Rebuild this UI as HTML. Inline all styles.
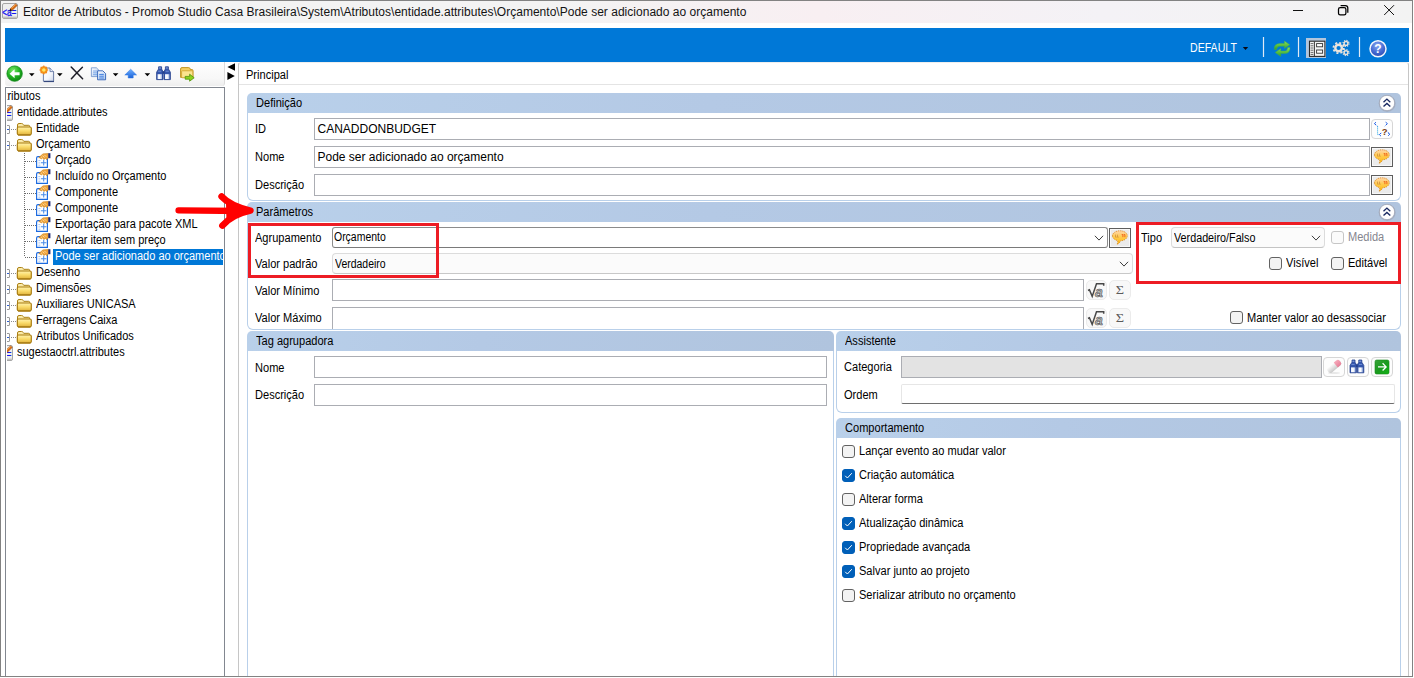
<!DOCTYPE html>
<html lang="pt-BR">
<head>
<meta charset="utf-8">
<title>Editor de Atributos</title>
<style>
*{box-sizing:border-box;margin:0;padding:0}
html,body{width:1414px;height:678px;overflow:hidden;background:#fff}
body{position:relative;font-family:"Liberation Sans",sans-serif;font-size:11px;color:#000;line-height:13px}
.a{position:absolute}
.t{position:absolute;white-space:nowrap;font-size:12px;line-height:13px;height:13px;margin:1px 0 0 -1px;transform-origin:0 0;transform:scaleX(.921)}
.u{position:absolute;white-space:nowrap;font-size:12px;line-height:13px;height:13px;margin:1px 0 0 -.5px}
.v{position:absolute;white-space:nowrap;font-size:12px;line-height:13px;height:13px;margin-top:1px}
.hdr{position:absolute;height:20px;background:linear-gradient(90deg,#b9d0ea 0%,#b4c9e5 40%,#b0c4de 100%);border-radius:5px 5px 0 0}
.gb{position:absolute;border:1px solid #b9d0ea;border-top:none;border-radius:0 0 6px 6px;background:#fff}
.in{position:absolute;height:22px;background:#fff;border:1px solid #abadb3}
.cb{position:absolute;width:13px;height:13px;border:1px solid #626262;border-radius:3px;background:#f3f3f3}
.cb.on{background:#005fb8;border-color:#005fb8}
.cb.dis{border-color:#c6c6c6;background:#fbfbfb}
.btn{position:absolute;width:22px;height:20px;border:1px solid #d6d6d6;border-radius:4px;background:#fdfdfd}
.btn2{position:absolute;width:22px;height:20px;border:1px solid #5e5e5e;background:#ebebeb;box-shadow:inset 0 0 0 1px #f8f8f8}
.tr{position:absolute;white-space:nowrap;font-size:11px;line-height:16px;height:16px;margin-left:-1px}
svg{position:absolute;overflow:visible}
</style>
</head>
<body>
<div class="a" style="left:0;top:0;width:1413px;height:677px;border:1px solid #828282"></div>
<div class="a" style="left:1px;top:1px;width:1411px;height:22px;background:linear-gradient(90deg,#f3f3f3 0%,#f3f3f3 38%,#f8eff2 58%,#f4f2f6 78%,#f3f3f3 100%)"></div>
<svg style="left:2px;top:3px" width="16" height="16"><use href="#appico"/></svg>
<svg style="left:1280px;top:0" width="130" height="24" viewBox="1280 0 130 24">
<path d="M1293 10.5 h10" stroke="#111" stroke-width="1"/>
<rect x="1338.5" y="7.5" width="7.4" height="7.4" rx="1.7" fill="none" stroke="#000" stroke-width="1.25"/>
<path d="M1340.6 5.5 h4.8 q2.4 0 2.4 2.4 v4.8" fill="none" stroke="#000" stroke-width="1.25"/>
<path d="M1384.2 5.2 l9.8 9.8 M1394 5.2 l-9.8 9.8" stroke="#111" stroke-width="1"/>
</svg>

<div class="u" style="left:23.5px;top:4px;line-height:15px;height:15px;color:#141414;letter-spacing:.018px">Editor de Atributos - Promob Studio Casa Brasileira\System\Atributos\entidade.attributes\Orçamento\Pode ser adicionado ao orçamento</div>
<div class="a" style="left:5px;top:28px;width:1404px;height:34px;background:#0078d7"></div>
<div class="u" style="left:1190px;top:41px;color:#fff;transform-origin:0 0;transform:scaleX(.882)">DEFAULT</div>
<svg style="left:1180px;top:28px" width="234" height="36" viewBox="1180 28 234 36">
<defs>
<linearGradient id="ggr" x1="0" y1="0" x2="0" y2="1"><stop offset="0" stop-color="#8be05a"/><stop offset="1" stop-color="#2fa12a"/></linearGradient>
<radialGradient id="ghelp" cx=".45" cy=".3" r=".75"><stop offset="0" stop-color="#86a6f2"/><stop offset=".6" stop-color="#4367d0"/><stop offset="1" stop-color="#2847ac"/></radialGradient>
</defs>
<path d="M1242.8 47 h5.4 l-2.7 3 z" fill="#0a0a14"/>
<path d="M1263.5 37 v20 M1298.5 37 v20 M1359.5 37 v20" stroke="#dfeaf6" stroke-width="1.2"/>
<!-- refresh -->
<path d="M1274.2 49.4 Q1274 43.8 1279.6 43.6 L1284.4 43.6 L1284.4 41 L1289.8 44.8 L1284.4 48.6 L1284.4 46.2 L1280 46.2 Q1276.8 46.2 1276.6 49.6 Z" fill="url(#ggr)" stroke="#46b43a" stroke-width=".4"/>
<path d="M1290 47.4 Q1290.2 53.4 1284.6 53.6 L1280.8 53.6 L1280.8 56.4 L1275.2 52.4 L1280.8 48.6 L1280.8 51 L1284.4 51 Q1287.4 51 1287.6 47.4 Z" fill="url(#ggr)" stroke="#46b43a" stroke-width=".4"/>
<!-- list icon -->
<rect x="1306" y="38" width="20" height="20" fill="#b3c6dc"/>
<rect x="1309.5" y="41.2" width="15.4" height="15.2" fill="#f4f4f4" stroke="#2a2a2a" stroke-width="1.1"/>
<path d="M1314.4 41.4 v15" stroke="#3a3a3a" stroke-width="1"/>
<path d="M1310.6 43.6 h2.8 M1310.6 45.8 h2.8 M1310.6 48 h2.8 M1310.6 50.2 h2.8 M1310.6 52.4 h2.8 M1310.6 54.4 h2.8" stroke="#444" stroke-width=".8"/>
<rect x="1316.6" y="43.6" width="6" height="3.2" fill="#fff" stroke="#333" stroke-width=".9"/>
<rect x="1316.6" y="50" width="6" height="3.2" fill="#fff" stroke="#333" stroke-width=".9"/>
<!-- gears -->
<g fill="none" stroke="#ebe4dc">
<circle cx="1338.6" cy="48" r="3.3" stroke-width="2.4"/>
<circle cx="1338.6" cy="48" r="5.2" stroke-width="1.8" stroke-dasharray="2.05 2.03"/>
<circle cx="1346" cy="43.4" r="1.9" stroke-width="1.4"/>
<circle cx="1346" cy="43.4" r="3" stroke-width="1.2" stroke-dasharray="1.2 1.16"/>
<circle cx="1346" cy="52.6" r="1.9" stroke-width="1.4"/>
<circle cx="1346" cy="52.6" r="3" stroke-width="1.2" stroke-dasharray="1.2 1.16"/>
</g>
<!-- help -->
<circle cx="1378" cy="48.8" r="8" fill="url(#ghelp)" stroke="#f4f7fd" stroke-width="1.5"/>
<text x="1378" y="53.4" text-anchor="middle" font-family="Liberation Sans,sans-serif" font-weight="bold" font-size="12" fill="#fff">?</text>
</svg>

<div class="a" style="left:5px;top:62px;width:220px;height:24px;border-right:1px solid #dcdcdc;border-radius:0 0 3px 3px;background:linear-gradient(#fefefe 0%,#f7f7f7 70%,#eeeeee 100%)"></div>
<svg style="left:0;top:0" width="240" height="90" viewBox="0 0 240 90">
<defs>
<radialGradient id="gback" cx=".4" cy=".3" r=".8"><stop offset="0" stop-color="#7be86a"/><stop offset=".5" stop-color="#22b322"/><stop offset="1" stop-color="#0a7d10"/></radialGradient>
<linearGradient id="gpage" x1="0" y1="0" x2="1" y2="1"><stop offset="0" stop-color="#ffffff"/><stop offset=".6" stop-color="#f4f6fb"/><stop offset="1" stop-color="#c9d2e6"/></linearGradient>
<linearGradient id="gcopy" x1="0" y1="0" x2="1" y2="1"><stop offset="0" stop-color="#ffffff"/><stop offset="1" stop-color="#a9c6ee"/></linearGradient>
<linearGradient id="gup" x1="0" y1="0" x2="0" y2="1"><stop offset="0" stop-color="#6fb0ff"/><stop offset="1" stop-color="#1a62d8"/></linearGradient>
<linearGradient id="gbin" x1="0" y1="0" x2="1" y2="0"><stop offset="0" stop-color="#e8eefc"/><stop offset=".5" stop-color="#ffffff"/><stop offset="1" stop-color="#9fb4e0"/></linearGradient>
<radialGradient id="gstar" cx=".5" cy=".5" r=".5"><stop offset="0" stop-color="#ffe95a"/><stop offset=".55" stop-color="#ffb21e"/><stop offset="1" stop-color="#f07a10"/></radialGradient>
</defs>
<!-- back -->
<circle cx="14.6" cy="73.6" r="7.7" fill="url(#gback)" stroke="#0f8a16" stroke-width=".8"/>
<path d="M9.6 73.7 L14.6 69.2 L14.6 72.2 L19.6 72.2 L19.6 75.2 L14.6 75.2 L14.6 78.2 Z" fill="#fff"/>
<path d="M29 73.2 h5.6 l-2.8 3 z M57 73.2 h5.6 l-2.8 3 z M112.8 73.2 h5.6 l-2.8 3 z M144.6 73.2 h5.6 l-2.8 3 z" fill="#000"/>
<!-- new doc -->
<path d="M43.4 68 L50 68 L53.6 71.6 L53.6 81.2 L43.4 81.2 Z" fill="url(#gpage)" stroke="#5b6f9c" stroke-width=".9"/>
<path d="M50 68 L50 71.6 L53.6 71.6" fill="#dfe6f4" stroke="#5b6f9c" stroke-width=".8"/>
<path d="M43.8 81.6 h10.2" stroke="#2c3f78" stroke-width="1"/>
<circle cx="43.8" cy="70" r="3.7" fill="url(#gstar)"/>
<path d="M43.8 65.6 v8.8 M39.4 70 h8.8 M40.7 66.9 l6.2 6.2 M46.9 66.9 l-6.2 6.2" stroke="#f28a16" stroke-width="1.1"/>
<circle cx="43.8" cy="70" r="1.8" fill="#ffe866"/>
<!-- delete X -->
<path d="M71.2 67 Q76 72 82.6 78.8 M82.4 67.2 Q76 73.5 71.4 78.8" fill="none" stroke="#1e1e28" stroke-width="1.5" stroke-linecap="round"/>
<!-- copy -->
<path d="M91.4 67.8 L96.4 67.8 L99 70.4 L99 76.6 L91.4 76.6 Z" fill="url(#gcopy)" stroke="#6b8fc8" stroke-width=".8"/>
<path d="M93 71 h4 M93 72.8 h4 M93 74.6 h4" stroke="#6ea0e6" stroke-width=".8"/>
<path d="M97.6 70.8 L102.8 70.8 L105.6 73.6 L105.6 79.8 L97.6 79.8 Z" fill="url(#gcopy)" stroke="#2d5fb6" stroke-width=".9"/>
<path d="M99.2 74.4 h4.6 M99.2 76.2 h4.6 M99.2 78 h4.6" stroke="#2f74de" stroke-width=".9"/>
<!-- up arrow -->
<path d="M130.7 69.2 L136.6 75 L133.2 75 L133.2 78 L128.2 78 L128.2 75 L124.8 75 Z" fill="url(#gup)" stroke="#2b74e2" stroke-width=".5"/>
<!-- binoculars -->
<g id="binoc">
<path d="M158.6 66.8 h3 v2.2 l1.4 2.6 v8 h-6.4 v-7.4 l2 -3.2z" fill="#3456ac" stroke="#233f8c" stroke-width=".8"/>
<path d="M165.4 66.8 h3 v2.2 l2 3.2 v7.4 h-6.4 v-8 l1.4 -2.6z" fill="#3456ac" stroke="#233f8c" stroke-width=".8"/>
<rect x="157.6" y="74.2" width="4.4" height="4.8" fill="url(#gbin)"/>
<rect x="165" y="74.2" width="4.4" height="4.8" fill="url(#gbin)"/>
<path d="M159 68 h2 M165.8 68 h2" stroke="#9db4ea" stroke-width=".9"/>
<path d="M158 71.2 h3.2 M165.6 71.2 h3.2" stroke="#7f9be0" stroke-width=".8"/>
<rect x="162.6" y="71.2" width="1.8" height="2.6" fill="#233f8c"/>
</g>
<!-- folder with arrow -->
<path d="M180.6 77.4 L180.6 69 Q180.6 67.6 182 67.6 L188.6 67.6 Q189.8 67.6 190.2 68.8 L190.4 69.6 L192 69.6 Q193 69.6 193 70.6 L193 77.4 Z" fill="#f3cf62" stroke="#bb8c14" stroke-width=".9"/>
<path d="M182.4 70.8 L192 70.8 Q192.8 70.8 192.8 71.6 L192.8 77.8 L182.4 77.8 Q181.6 77.8 181.6 77 L181.6 71.6 Q181.6 70.8 182.4 70.8Z" fill="#fbe48e" stroke="#c79a22" stroke-width=".7"/>
<path d="M185.2 76.4 L189.6 76.4 L189.6 74.2 L194.2 77.8 L189.6 81.2 L189.6 79.2 L185.2 79.2 Z" fill="#8ed11e" stroke="#4f9208" stroke-width=".8"/>
</svg>

<div class="a" style="left:5px;top:87px;width:220px;height:589px;border:1px solid #828790;border-bottom:none;background:#fff;overflow:hidden">
<svg width="0" height="0" style="left:0;top:0"><defs>
<linearGradient id="fg" x1="0" y1="0" x2="0" y2="1"><stop offset="0" stop-color="#fff3b0"/><stop offset=".5" stop-color="#fadb6a"/><stop offset="1" stop-color="#e0b23c"/></linearGradient>
<linearGradient id="fb" x1="0" y1="0" x2="0" y2="1"><stop offset="0" stop-color="#fdf0b4"/><stop offset="1" stop-color="#e8c96a"/></linearGradient>
<symbol id="fold" viewBox="0 0 16 14">
<path d="M1.5 11.5 L1.5 3 Q1.5 1.5 3 1.5 L5.6 1.5 Q6.6 1.5 7.2 2.4 L7.8 3.3 L12.6 3.3 Q13.6 3.3 13.6 4.3 L13.6 6" fill="url(#fb)" stroke="#ab8014" stroke-width="1"/>
<path d="M2.3 5 L14 5 Q15.3 5 15.3 6.2 L15.3 11.6 Q15.3 12.8 14 12.8 L2.6 12.8 Q1.3 12.8 1.3 11.6 L1.3 6 Q1.3 5 2.3 5 Z" fill="url(#fg)" stroke="#a97c10" stroke-width="1.15"/>
<path d="M2 13 L14.6 13" stroke="#a87c14" stroke-width="1.2"/>
</symbol>
<symbol id="att" viewBox="0 0 16 16">
<path d="M0.6 5 Q0.6 3.6 2 3.6 L11.4 3.6 L11.4 14.4 L0.6 14.4 Z" fill="#fff" stroke="#1b6ae0" stroke-width="1.15"/>
<path d="M2.4 7.6 h2 M2.4 9.9 h2 M2.4 12.2 h2" stroke="#9cc0f2" stroke-width=".9"/>
<path d="M7.7 6.8 v5.8 M5 9.7 h5.4" stroke="#4a8ce8" stroke-width="1.05"/>
<path d="M2.8 4.6 L7 0.9 L12.4 0.6 L12.4 4.8 L10.6 6.6 L9.4 5.2 L8 6.4 L6.6 5 L5.2 6 L4 4.8 Z" fill="#f1a53c" stroke="#cf8218" stroke-width=".7"/>
<path d="M6.5 2.6 L8.5 4.4 M8.3 1.8 L10.3 3.8 M5 3.8 L6.4 5" stroke="#fde9c0" stroke-width=".7"/>
<rect x="12.3" y="0.2" width="2.1" height="5" fill="#1c2a78"/>
</symbol>
<symbol id="appico" viewBox="0 0 16 16">
<rect x="0.5" y="0.5" width="15" height="15" rx="1.5" fill="#eeeeee" stroke="#a6a6a6"/>
<path d="M1 13.6 h14 v1.4 h-14z" fill="#c2c2c2"/>
<text x="0.2" y="13" font-family="Liberation Sans,sans-serif" font-size="10.5" fill="#1616ee" stroke="#1616ee" stroke-width=".35" textLength="14.2" lengthAdjust="spacingAndGlyphs">&lt;a=</text>
<path d="M13.6 0.8 L15.2 2.6 L10.2 7.4 L8.2 5.8 Z" fill="#d96c12" stroke="#9a4a08" stroke-width=".5"/>
<path d="M8.2 5.8 L10.2 7.4 L7.4 8.6 Z" fill="#1c1208"/>
<path d="M9.6 5.2 L13.8 1.4" stroke="#f5a95a" stroke-width=".9"/>
</symbol>
</defs></svg>
<div class="tr" style="left:-8.3px;top:0px;font-size:12px;transform-origin:0 0;transform:scaleX(.917)">Atributos</div>
<div class="a" style="left:1px;top:17px;width:6px;height:16px;overflow:hidden"><svg style="left:-10px;top:0" width="16" height="16"><use href="#appico"/></svg></div>
<div class="tr" style="left:12px;top:16px;font-size:12px;transform-origin:0 0;transform:scaleX(.917)">entidade.attributes</div>
<svg style="left:10px;top:34px" width="16" height="14"><use href="#fold"/></svg>
<div class="a" style="left:-4px;top:37px;width:8px;height:9px;border:1px solid #9a9a9a;border-radius:1px;background:#fff"></div>
<div class="a" style="left:1px;top:41px;width:2px;height:1px;background:#2f5fd0"></div>
<div class="a" style="left:5px;top:41px;width:5px;height:1px;background:repeating-linear-gradient(90deg,#8c8c8c 0 1px,transparent 1px 2px)"></div>
<div class="tr" style="left:30.5px;top:32px;font-size:12px;transform-origin:0 0;transform:scaleX(.917)">Entidade</div>
<svg style="left:10px;top:50px" width="16" height="14"><use href="#fold"/></svg>
<div class="a" style="left:-4px;top:53px;width:8px;height:9px;border:1px solid #9a9a9a;border-radius:1px;background:#fff"></div>
<div class="a" style="left:1px;top:57px;width:2px;height:1px;background:#2f5fd0"></div>
<div class="a" style="left:5px;top:57px;width:5px;height:1px;background:repeating-linear-gradient(90deg,#8c8c8c 0 1px,transparent 1px 2px)"></div>
<div class="tr" style="left:30.5px;top:48px;font-size:12px;transform-origin:0 0;transform:scaleX(.917)">Orçamento</div>
<svg style="left:30px;top:65px" width="16" height="16"><use href="#att"/></svg>
<div class="a" style="left:19px;top:73px;width:11px;height:1px;background:repeating-linear-gradient(90deg,#6c6c6c 0 1px,transparent 1px 2px)"></div>
<div class="tr" style="left:50px;top:64px;font-size:12px;transform-origin:0 0;transform:scaleX(.917)">Orçado</div>
<svg style="left:30px;top:81px" width="16" height="16"><use href="#att"/></svg>
<div class="a" style="left:19px;top:89px;width:11px;height:1px;background:repeating-linear-gradient(90deg,#6c6c6c 0 1px,transparent 1px 2px)"></div>
<div class="tr" style="left:50px;top:80px;font-size:12px;transform-origin:0 0;transform:scaleX(.917)">Incluído no Orçamento</div>
<svg style="left:30px;top:97px" width="16" height="16"><use href="#att"/></svg>
<div class="a" style="left:19px;top:105px;width:11px;height:1px;background:repeating-linear-gradient(90deg,#6c6c6c 0 1px,transparent 1px 2px)"></div>
<div class="tr" style="left:50px;top:96px;font-size:12px;transform-origin:0 0;transform:scaleX(.917)">Componente</div>
<svg style="left:30px;top:113px" width="16" height="16"><use href="#att"/></svg>
<div class="a" style="left:19px;top:121px;width:11px;height:1px;background:repeating-linear-gradient(90deg,#6c6c6c 0 1px,transparent 1px 2px)"></div>
<div class="tr" style="left:50px;top:112px;font-size:12px;transform-origin:0 0;transform:scaleX(.917)">Componente</div>
<svg style="left:30px;top:129px" width="16" height="16"><use href="#att"/></svg>
<div class="a" style="left:19px;top:137px;width:11px;height:1px;background:repeating-linear-gradient(90deg,#6c6c6c 0 1px,transparent 1px 2px)"></div>
<div class="tr" style="left:50px;top:128px;font-size:12px;transform-origin:0 0;transform:scaleX(.917)">Exportação para pacote XML</div>
<svg style="left:30px;top:145px" width="16" height="16"><use href="#att"/></svg>
<div class="a" style="left:19px;top:153px;width:11px;height:1px;background:repeating-linear-gradient(90deg,#6c6c6c 0 1px,transparent 1px 2px)"></div>
<div class="tr" style="left:50px;top:144px;font-size:12px;transform-origin:0 0;transform:scaleX(.917)">Alertar item sem preço</div>
<svg style="left:30px;top:161px" width="16" height="16"><use href="#att"/></svg>
<div class="a" style="left:19px;top:169px;width:11px;height:1px;background:repeating-linear-gradient(90deg,#6c6c6c 0 1px,transparent 1px 2px)"></div>
<div class="a" style="left:47px;top:161px;width:180px;height:16px;background:#0078d7"></div>
<div class="tr" style="left:50px;top:160px;font-size:12px;transform-origin:0 0;transform:scaleX(.917);color:#fff">Pode ser adicionado ao orçamento</div>
<div class="a" style="left:18px;top:65px;width:1px;height:104px;background:repeating-linear-gradient(180deg,#6c6c6c 0 1px,transparent 1px 2px)"></div>
<svg style="left:10px;top:178px" width="16" height="14"><use href="#fold"/></svg>
<div class="a" style="left:-4px;top:181px;width:8px;height:9px;border:1px solid #9a9a9a;border-radius:1px;background:#fff"></div>
<div class="a" style="left:1px;top:185px;width:2px;height:1px;background:#2f5fd0"></div>
<div class="a" style="left:5px;top:185px;width:5px;height:1px;background:repeating-linear-gradient(90deg,#8c8c8c 0 1px,transparent 1px 2px)"></div>
<div class="tr" style="left:30.5px;top:176px;font-size:12px;transform-origin:0 0;transform:scaleX(.917)">Desenho</div>
<svg style="left:10px;top:194px" width="16" height="14"><use href="#fold"/></svg>
<div class="a" style="left:-4px;top:197px;width:8px;height:9px;border:1px solid #9a9a9a;border-radius:1px;background:#fff"></div>
<div class="a" style="left:1px;top:201px;width:2px;height:1px;background:#2f5fd0"></div>
<div class="a" style="left:5px;top:201px;width:5px;height:1px;background:repeating-linear-gradient(90deg,#8c8c8c 0 1px,transparent 1px 2px)"></div>
<div class="tr" style="left:30.5px;top:192px;font-size:12px;transform-origin:0 0;transform:scaleX(.917)">Dimensões</div>
<svg style="left:10px;top:210px" width="16" height="14"><use href="#fold"/></svg>
<div class="a" style="left:-4px;top:213px;width:8px;height:9px;border:1px solid #9a9a9a;border-radius:1px;background:#fff"></div>
<div class="a" style="left:1px;top:217px;width:2px;height:1px;background:#2f5fd0"></div>
<div class="a" style="left:5px;top:217px;width:5px;height:1px;background:repeating-linear-gradient(90deg,#8c8c8c 0 1px,transparent 1px 2px)"></div>
<div class="tr" style="left:30.5px;top:208px;font-size:12px;transform-origin:0 0;transform:scaleX(.917)">Auxiliares UNICASA</div>
<svg style="left:10px;top:226px" width="16" height="14"><use href="#fold"/></svg>
<div class="a" style="left:-4px;top:229px;width:8px;height:9px;border:1px solid #9a9a9a;border-radius:1px;background:#fff"></div>
<div class="a" style="left:1px;top:233px;width:2px;height:1px;background:#2f5fd0"></div>
<div class="a" style="left:5px;top:233px;width:5px;height:1px;background:repeating-linear-gradient(90deg,#8c8c8c 0 1px,transparent 1px 2px)"></div>
<div class="tr" style="left:30.5px;top:224px;font-size:12px;transform-origin:0 0;transform:scaleX(.917)">Ferragens Caixa</div>
<svg style="left:10px;top:242px" width="16" height="14"><use href="#fold"/></svg>
<div class="a" style="left:-4px;top:245px;width:8px;height:9px;border:1px solid #9a9a9a;border-radius:1px;background:#fff"></div>
<div class="a" style="left:1px;top:249px;width:2px;height:1px;background:#2f5fd0"></div>
<div class="a" style="left:5px;top:249px;width:5px;height:1px;background:repeating-linear-gradient(90deg,#8c8c8c 0 1px,transparent 1px 2px)"></div>
<div class="tr" style="left:30.5px;top:240px;font-size:12px;transform-origin:0 0;transform:scaleX(.917)">Atributos Unificados</div>
<div class="a" style="left:1px;top:257px;width:6px;height:16px;overflow:hidden"><svg style="left:-10px;top:0" width="16" height="16"><use href="#appico"/></svg></div>
<div class="tr" style="left:12px;top:256px;font-size:12px;transform-origin:0 0;transform:scaleX(.917)">sugestaoctrl.attributes</div>
<div class="a" style="left:0;top:0;width:1px;height:600px;background:#fff"></div>
<div class="a" style="left:217px;top:0;width:1px;height:600px;background:#fff"></div>
</div>
<svg style="left:227px;top:63px" width="10" height="18" viewBox="0 0 10 18"><path d="M8 0.2 L8 7.8 L0.4 4 Z M0.4 9 L0.4 17 L7.8 13 Z" fill="#000"/></svg>
<div class="a" style="left:238px;top:62px;width:1171px;height:614px;border:1px solid #c6c6c6;border-bottom:none;border-top:1px solid #eeeeee;border-radius:3px 3px 0 0;background:#fff"></div>
<div class="t" style="left:246.5px;top:68px">Principal</div>
<div class="a" style="left:239px;top:84px;width:1169px;height:1px;background:#e4e4e4"></div>
<div class="hdr" style="left:247px;top:93px;width:1154px"></div>
<div class="gb" style="left:247px;top:113px;width:1154px;height:88px;"></div>
<div class="t" style="left:256.5px;top:96px">Definição</div>
<svg style="left:1376.6px;top:93px" width="20" height="20" viewBox="-10 -10 20 20"><circle r="8.5" fill="#9aa2b4" opacity=".55" cx="0.2" cy="0.4"/><circle r="7.7" fill="#fefefe" stroke="#9098aa" stroke-width=".7"/><path d="M-3.5 -0.7 L-0.1 -3.9 L3.3 -0.7 M-3.5 3.6 L-0.1 0.4 L3.3 3.6" fill="none" stroke="#1a2a62" stroke-width="1.35"/></svg>
<div class="t" style="left:255.5px;top:122px">ID</div>
<div class="in" style="left:314px;top:118px;width:1056px"></div>
<div class="u" style="left:318px;top:122px">CANADDONBUDGET</div>
<div class="t" style="left:255.5px;top:150px">Nome</div>
<div class="in" style="left:314px;top:146px;width:1056px"></div>
<div class="u" style="left:318px;top:150px">Pode ser adicionado ao orçamento</div>
<div class="t" style="left:255.5px;top:178px">Descrição</div>
<div class="in" style="left:314px;top:174px;width:1056px"></div>
<div class="btn" style="left:1371px;top:119px"></div>
<div class="btn2" style="left:1371px;top:147px"></div>
<div class="btn2" style="left:1371px;top:175px"></div>
<div class="hdr" style="left:247px;top:202px;width:1154px"></div>
<div class="gb" style="left:247px;top:222px;width:1154px;height:108px;"></div>
<div class="t" style="left:256.5px;top:205px">Parâmetros</div>
<svg style="left:1376.6px;top:202px" width="20" height="20" viewBox="-10 -10 20 20"><circle r="8.5" fill="#9aa2b4" opacity=".55" cx="0.2" cy="0.4"/><circle r="7.7" fill="#fefefe" stroke="#9098aa" stroke-width=".7"/><path d="M-3.5 -0.7 L-0.1 -3.9 L3.3 -0.7 M-3.5 3.6 L-0.1 0.4 L3.3 3.6" fill="none" stroke="#1a2a62" stroke-width="1.35"/></svg>
<div class="t" style="left:256px;top:231px">Agrupamento</div>
<div class="t" style="left:256px;top:257px">Valor padrão</div>
<div class="t" style="left:256px;top:284px">Valor Mínimo</div>
<div class="t" style="left:256px;top:311px">Valor Máximo</div>
<div class="a" style="left:332px;top:227px;width:776px;height:21px;border:1px solid #8c8c8c;border-bottom-color:#7a7a7a;border-radius:3px;background:#fff"></div>
<div class="v" style="left:334px;top:230px;transform-origin:0 0;transform:scaleX(.872)">Orçamento</div>
<div class="a" style="left:332px;top:253px;width:801px;height:21px;border:1px solid #dcdcdc;border-bottom-color:#c8c8c8;border-radius:4px;background:#fbfbfb"></div>
<div class="v" style="left:335px;top:257px;transform-origin:0 0;transform:scaleX(.872)">Verdadeiro</div>
<div class="in" style="left:332px;top:279px;width:752px;height:22px"></div>
<div class="in" style="left:332px;top:307px;width:752px;height:22px;border-bottom:none"></div>
<svg style="left:1094px;top:234.8px" width="10" height="6" viewBox="-5 -3 10 6"><path d="M-4.1 -2.2 L0 2.1 L4.1 -2.2" fill="none" stroke="#3c3c3c" stroke-width="1"/></svg>
<svg style="left:1119px;top:261px" width="10" height="6" viewBox="-5 -3 10 6"><path d="M-4.1 -2.2 L0 2.1 L4.1 -2.2" fill="none" stroke="#3c3c3c" stroke-width="1"/></svg>
<div class="btn2" style="left:1109px;top:228px"></div>
<div class="btn" style="left:1085.5px;top:280px;width:21px;height:20px;background:#f8f8f8;border-color:#ebebeb;border-radius:5px"></div>
<div class="btn" style="left:1109px;top:280px;width:22px;height:20px;background:#f8f8f8;border-color:#ebebeb;border-radius:5px"></div>
<div class="btn" style="left:1085.5px;top:308px;width:21px;height:20px;background:#f8f8f8;border-color:#ebebeb;border-radius:5px"></div>
<div class="btn" style="left:1109px;top:308px;width:22px;height:20px;background:#f8f8f8;border-color:#ebebeb;border-radius:5px"></div>
<div class="t" style="left:1142px;top:231px">Tipo</div>
<div class="a" style="left:1171px;top:227px;width:154px;height:21px;border:1px solid #dcdcdc;border-bottom-color:#c4c4c4;border-radius:4px;background:#fbfbfb"></div>
<div class="v" style="left:1173.5px;top:231px;transform-origin:0 0;transform:scaleX(.897)">Verdadeiro/Falso</div>
<svg style="left:1311px;top:234.8px" width="10" height="6" viewBox="-5 -3 10 6"><path d="M-4.1 -2.2 L0 2.1 L4.1 -2.2" fill="none" stroke="#3c3c3c" stroke-width="1"/></svg>
<div class="cb dis" style="left:1331px;top:231px"></div>
<div class="t" style="left:1349px;top:230px;color:#85858f">Medida</div>
<div class="cb" style="left:1269px;top:257px"></div>
<div class="t" style="left:1287px;top:256px">Visível</div>
<div class="cb" style="left:1331px;top:257px"></div>
<div class="t" style="left:1349px;top:256px">Editável</div>
<div class="cb" style="left:1230px;top:311px"></div>
<div class="t" style="left:1247.5px;top:311px">Manter valor ao desassociar</div>
<div class="hdr" style="left:247px;top:331px;width:587px"></div>
<div class="gb" style="left:247px;top:351px;width:587px;height:325px;border-bottom:none;border-radius:0;"></div>
<div class="t" style="left:256.5px;top:334px">Tag agrupadora</div>
<div class="t" style="left:256px;top:361px">Nome</div>
<div class="t" style="left:256px;top:388px">Descrição</div>
<div class="in" style="left:314px;top:356px;width:513px"></div>
<div class="in" style="left:314px;top:384px;width:513px"></div>
<div class="hdr" style="left:836px;top:331px;width:565px"></div>
<div class="gb" style="left:836px;top:351px;width:565px;height:62px;"></div>
<div class="t" style="left:845.5px;top:334px">Assistente</div>
<div class="t" style="left:845px;top:360px">Categoria</div>
<div class="t" style="left:845px;top:388px">Ordem</div>
<div class="in" style="left:901px;top:356px;width:421px;background:#e3e3e3"></div>
<div class="a" style="left:901px;top:384px;width:494px;height:20px;border:1px solid #e6e6e6;border-bottom:1px solid #6e6e6e;border-radius:2px;background:#fff"></div>
<div class="btn" style="left:1323px;top:357px"></div>
<div class="btn" style="left:1347px;top:357px"></div>
<div class="btn" style="left:1371px;top:357px"></div>
<div class="hdr" style="left:836px;top:418px;width:565px"></div>
<div class="gb" style="left:836px;top:438px;width:565px;height:238px;border-bottom:none;border-radius:0;"></div>
<div class="t" style="left:845.5px;top:421px">Comportamento</div>
<div class="cb" style="left:842px;top:445px"></div>
<div class="t" style="left:859.5px;top:444px">Lançar evento ao mudar valor</div>
<div class="cb on" style="left:842px;top:469px"><svg style="left:-1px;top:-1px" width="13" height="13" viewBox="0 0 13 13"><path d="M3.2 6.8 L5.4 9 L9.8 4.2" fill="none" stroke="#fff" stroke-width="1"/></svg></div>
<div class="t" style="left:859.5px;top:468px">Criação automática</div>
<div class="cb" style="left:842px;top:493px"></div>
<div class="t" style="left:859.5px;top:492px">Alterar forma</div>
<div class="cb on" style="left:842px;top:517px"><svg style="left:-1px;top:-1px" width="13" height="13" viewBox="0 0 13 13"><path d="M3.2 6.8 L5.4 9 L9.8 4.2" fill="none" stroke="#fff" stroke-width="1"/></svg></div>
<div class="t" style="left:859.5px;top:516px">Atualização dinâmica</div>
<div class="cb on" style="left:842px;top:541px"><svg style="left:-1px;top:-1px" width="13" height="13" viewBox="0 0 13 13"><path d="M3.2 6.8 L5.4 9 L9.8 4.2" fill="none" stroke="#fff" stroke-width="1"/></svg></div>
<div class="t" style="left:859.5px;top:540px">Propriedade avançada</div>
<div class="cb on" style="left:842px;top:565px"><svg style="left:-1px;top:-1px" width="13" height="13" viewBox="0 0 13 13"><path d="M3.2 6.8 L5.4 9 L9.8 4.2" fill="none" stroke="#fff" stroke-width="1"/></svg></div>
<div class="t" style="left:859.5px;top:564px">Salvar junto ao projeto</div>
<div class="cb" style="left:842px;top:589px"></div>
<div class="t" style="left:859.5px;top:588px">Serializar atributo no orçamento</div>
<svg style="left:0;top:0" width="1414" height="678" viewBox="0 0 1414 678">
<defs>
<linearGradient id="gbub" x1="0" y1="0" x2="0" y2="1"><stop offset="0" stop-color="#ffd6ac"/><stop offset=".45" stop-color="#ffcb4e"/><stop offset="1" stop-color="#ffb90e"/></linearGradient>
<linearGradient id="gers" x1="0" y1="0" x2="0" y2="1"><stop offset="0" stop-color="#ffffff"/><stop offset="1" stop-color="#c8c8c8"/></linearGradient>
<linearGradient id="gpink" x1="0" y1="0" x2="0" y2="1"><stop offset="0" stop-color="#f7aabb"/><stop offset="1" stop-color="#e67f98"/></linearGradient>
<linearGradient id="ggo" x1="0" y1="0" x2="1" y2="1"><stop offset="0" stop-color="#3aa43a"/><stop offset=".5" stop-color="#1a9a1e"/><stop offset="1" stop-color="#12b416"/></linearGradient>
<g id="bub">
<path d="M-7.4 -.6 C-7.4 -3.6 -4 -5.6 0 -5.6 C4 -5.6 7.4 -3.6 7.4 -.6 C7.4 2.4 4 4.3 .8 4.4 C-.2 6.2 -1.4 7.6 -2.8 8 C-2.2 6.8 -2 5.4 -2.2 4.2 C-5.2 3.6 -7.4 1.8 -7.4 -.6Z" fill="url(#gbub)" stroke="#d9861a" stroke-width=".8" stroke-dasharray="1.2 .8"/>
<path d="M-4.4 -1.8 v2.6 h1.2 M-2.4 -1.8 v2.6 h1.2" fill="none" stroke="#c8883a" stroke-width=".7"/>
<path d="M1.8 -1.8 h1.2 v2.6 M3.8 -1.8 h1.2 v2.6" fill="none" stroke="#ee5a12" stroke-width=".9"/>
</g>

</defs>
<!-- ID button icon -->
<g fill="none" stroke="#1f5fe8" stroke-width="1">
<path d="M1376 122.2 L1374.4 123.6 L1376 125 M1385.6 122.2 L1387.4 123.6 L1385.8 125.2 M1388.2 132.6 L1389.8 134.2 L1388.2 135.8 M1381 133 L1379.4 134.6 L1381 136.2"/>
<path d="M1375.4 124.4 L1377.6 126.4 M1386.6 124.4 L1384.8 126.2 M1388.8 133.6 L1387 131.8 M1380.4 133.8 L1382 132.2" stroke-dasharray="1 1"/>
<path d="M1377.6 126.4 V134.6 H1379.4" stroke="#1aa0e0" stroke-dasharray="1 1"/>
</g>
<text x="1384.6" y="134.6" text-anchor="middle" font-family="Liberation Sans,sans-serif" font-weight="bold" font-size="9.5" fill="#7a3c0e">?</text>
<!-- speech bubbles -->
<use href="#bub" x="1381.9" y="155.4"/>
<use href="#bub" x="1381.9" y="183.4"/>
<use href="#bub" x="1119.9" y="236.4"/>
<!-- sqrt -->
<path d="M1088 290.5 L1089.4 289.8 L1092.2 296.4 L1096.5 283.7 L1103.7 283.7 L1103.7 285.8" fill="none" stroke="#484848" stroke-width="1.5"/>
<text x="1095" y="296.8" style="font:italic bold 14px 'Liberation Sans',sans-serif" fill="#b8b8b8" stroke="#4c4c4c" stroke-width=".55">a</text>
<text x="1120" y="294.2" text-anchor="middle" style="font:13px 'Liberation Serif',serif" fill="#5a5a5a" transform="translate(1120 0) scale(1.1 1) translate(-1120 0)">Σ</text>
<path d="M1088 318.5 L1089.4 317.8 L1092.2 324.4 L1096.5 311.7 L1103.7 311.7 L1103.7 313.8" fill="none" stroke="#484848" stroke-width="1.5"/>
<text x="1095" y="324.8" style="font:italic bold 14px 'Liberation Sans',sans-serif" fill="#b8b8b8" stroke="#4c4c4c" stroke-width=".55">a</text>
<text x="1120" y="322.2" text-anchor="middle" style="font:13px 'Liberation Serif',serif" fill="#5a5a5a" transform="translate(1120 0) scale(1.1 1) translate(-1120 0)">Σ</text>
<!-- eraser -->
<ellipse cx="1334" cy="373" rx="6" ry="1.1" fill="#e8e8e8"/>
<g transform="translate(1334.1 366.4) rotate(-40)">
<rect x="-7.9" y="-3.2" width="15.8" height="6.4" rx="2.4" fill="url(#gers)"/>
<path d="M2.2 -3.2 L5.5 -3.2 Q7.9 -3.2 7.9 -.8 L7.9 .8 Q7.9 3.2 5.5 3.2 L2.2 3.2 Z" fill="url(#gpink)"/>
</g>
<!-- binoculars -->
<use href="#binoc" x="1193.4" y="293.2"/>
<!-- go -->
<rect x="1375" y="360" width="14" height="14" rx="1.6" fill="url(#ggo)" stroke="#168a1a" stroke-width=".6"/>
<path d="M1378 366.9 h7.8 M1382.6 363.3 l3.5 3.6 l-3.5 3.6" fill="none" stroke="#fff" stroke-width="1.3"/>
</svg>

<div class="a" style="left:248px;top:223px;width:191px;height:55px;border:3px solid #ed1c24"></div>
<div class="a" style="left:1136px;top:222px;width:265px;height:62px;border:3px solid #ed1c24"></div>
<svg style="left:170px;top:188px" width="90" height="46" viewBox="170 188 90 46">
<path d="M178.6 210.4 L243 211" fill="none" stroke="#ff0000" stroke-width="6.4" stroke-linecap="round"/>
<path d="M221.6 196.4 Q230 205.6 250.4 210.6 Q232 214.6 222.4 225.6" fill="none" stroke="#ff0000" stroke-width="6.6" stroke-linecap="round" stroke-linejoin="round"/>
<path d="M226 203.4 Q238 208.6 252 210.6 Q238 212.4 226.4 218.6 Z" fill="#ff0000"/>
</svg>

</body>
</html>
